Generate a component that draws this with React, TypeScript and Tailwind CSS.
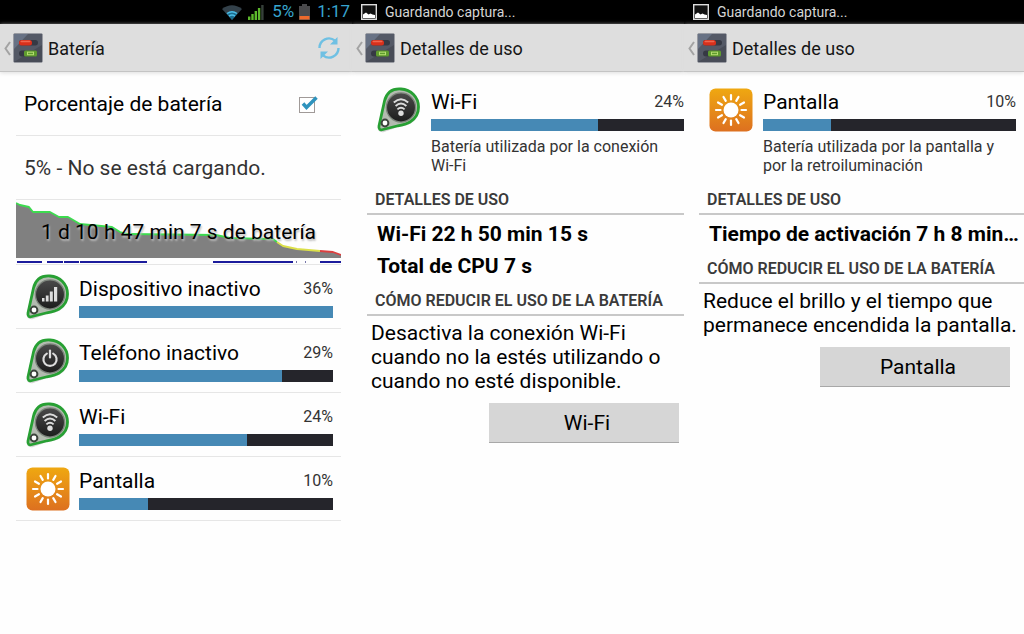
import { useState } from 'react'
import type { ReactNode } from 'react'

type IconKind = 'signal' | 'power' | 'wifi' | 'screen'

type Usage = {
    kind: IconKind
    name: string
    percent: number
    fill: number
}

const usages: Usage[] = [
    { kind: 'signal', name: 'Dispositivo inactivo', percent: 36, fill: 100 },
    { kind: 'power', name: 'Teléfono inactivo', percent: 29, fill: 80 },
    { kind: 'wifi', name: 'Wi-Fi', percent: 24, fill: 66 },
    { kind: 'screen', name: 'Pantalla', percent: 10, fill: 27 },
]

const SunIcon = () => (
    <svg viewBox="0 0 44 44" className="size-11 shrink-0" aria-hidden="true">
        <defs>
            <linearGradient id="sun" x1="0" y1="0" x2="0" y2="1">
                <stop offset="0" stopColor="#efa811" />
                <stop offset="1" stopColor="#dd7020" />
            </linearGradient>
        </defs>
        <rect x="0.5" y="0.5" width="43" height="43" rx="6" fill="url(#sun)" />
        <circle cx="22" cy="22" r="7.5" fill="#fff" />
        <g stroke="#fff" strokeWidth="2.2" strokeLinecap="round">
            {[0, 30, 60, 90, 120, 150, 180, 210, 240, 270, 300, 330].map((angle) => (
                <path key={angle} d="M22 11.5V7" transform={`rotate(${angle} 22 22)`} />
            ))}
        </g>
    </svg>
)

const glyphs: Record<string, ReactNode> = {
    signal: (
        <g fill="#ddd">
            <rect x="16" y="23" width="2.5" height="3.5" />
            <rect x="19.8" y="20.5" width="2.8" height="6" />
            <rect x="23.8" y="16.5" width="3" height="10" />
            <rect x="28" y="12" width="3.2" height="14.5" />
        </g>
    ),
    power: (
        <g fill="none" stroke="#ddd" strokeWidth="2.2" strokeLinecap="round">
            <path d="M20.8 14.6A6.6 6.6 0 1 0 27.2 14.6" />
            <path d="M24 11.5V18.5" />
        </g>
    ),
    wifi: (
        <g fill="none" stroke="#ddd" strokeWidth="1.9">
            <path d="M16.8 14.5Q24 8 31.2 14.5" />
            <path d="M18.6 18Q24 13.2 29.4 18" />
            <path d="M20.4 21.4Q24 18.2 27.6 21.4" />
            <circle cx="24" cy="25.3" r="2.7" fill="#ddd" stroke="none" />
        </g>
    ),
}

const TagIcon = ({ kind }: { kind: IconKind }) => (
    <svg viewBox="0 0 44 44" className="size-11 shrink-0 overflow-visible" aria-hidden="true">
        <defs>
            <linearGradient id="disc" x1="0" y1="0" x2="0" y2="1">
                <stop offset="0" stopColor="#4a4a4a" />
                <stop offset="1" stopColor="#1c1c1c" />
            </linearGradient>
        </defs>
        <path d="M7 12C11 1 28-3 37 6C45 13 45 27 36 34C31 38 26 38 21 39L7 44C3 45 0 42 1 38Z" fill="#777" opacity="0.3" />
        <path d="M7.5 13C10 3 17 0.5 24 1C34 1.5 41.5 9 41.5 19C41.5 26 38 31 33 34C29 36.5 25 37 20 38L6 41.5C3 42.500 1.5 41 2 38Z" fill="#b3bbb0" stroke="#27a033" strokeWidth="2.8" />
        <circle cx="24" cy="19.5" r="14.6" fill="url(#disc)" stroke="#7d857c" strokeWidth="1.3" />
        <circle cx="8" cy="35" r="3.4" fill="#fff" stroke="#3c443c" strokeWidth="2" />
        {glyphs[kind]}
    </svg>
)

const UsageIcon = ({ kind }: { kind: IconKind }) => (kind === 'screen' ? <SunIcon /> : <TagIcon kind={kind} />)

const SettingsIcon = () => (
    <svg viewBox="0 0 30 30" className="size-[30px]" aria-hidden="true">
        <rect x="0.5" y="0.5" width="29" height="29" rx="1" fill="#545966" />
        <path d="M1 1H15L1 16Z" fill="#687285" />
        <path d="M1 29L29 12V29Z" fill="#484c57" />
        <rect x="6" y="7" width="19" height="5.5" rx="2.7" fill="#363944" />
        <rect x="6" y="7" width="13" height="5.5" rx="2.5" fill="#d8301c" />
        <rect x="7.5" y="7.8" width="10" height="1.5" rx="0.7" fill="#ee6750" />
        <rect x="6" y="17.5" width="18" height="6" rx="3" fill="#363944" />
        <rect x="11" y="17.5" width="13" height="6" rx="1.5" fill="#5f9c2f" />
        <rect x="14.5" y="19.2" width="6" height="2.5" fill="none" stroke="#b5dd70" />
    </svg>
)

const RefreshIcon = () => (
    <svg viewBox="0 0 24 24" className="size-6" fill="none" stroke="#6fc0e3" strokeWidth="2.4" aria-hidden="true">
        <path d="M2.5 12A9.5 9.5 0 0 1 18 4.6" />
        <path d="M21.5 12A9.5 9.5 0 0 1 6 19.4" />
        <path d="M20.5 1V8.5H13Z" fill="#6fc0e3" stroke="none" />
        <path d="M3.5 23V15.5H11Z" fill="#6fc0e3" stroke="none" />
    </svg>
)

const PictureIcon = () => (
    <svg viewBox="0 0 16 16" className="size-4" aria-hidden="true">
        <rect x="0.7" y="0.7" width="14.6" height="14.6" fill="#111" stroke="#ddd" strokeWidth="1.4" />
        <path d="M2 14V10.5L5 8.5L7.5 10.5L9.5 9.5L11.5 10.5L14 11V14Z" fill="#fff" />
    </svg>
)

const StatusIcons = () => (
    <div className="flex h-full items-center justify-end pr-[2px] text-[17px] text-[#37a5cf]">
        <svg viewBox="0 0 20 15" className="mr-[6px] h-[15px] w-5" aria-label="Wi-Fi">
            <path d="M0 4Q10-3.5 20 4L10 15Z" fill="#33414a" />
            <path d="M4.5 8.5Q10 4.5 15.5 8.5L10 15Z" fill="#1b6d8f" />
            <path d="M5 8.5Q10 4.8 15 8.5M7 11.2Q10 9 13 11.2" fill="none" stroke="#4cbde6" strokeWidth="1.5" />
        </svg>
        <svg viewBox="0 0 16 15" className="mr-2 h-[15px] w-4" aria-label="Señal">
            <rect x="0" y="11.5" width="2.4" height="3.5" fill="#5cb82c" />
            <rect x="3.3" y="9" width="2.4" height="6" fill="#5cb82c" />
            <rect x="6.6" y="6" width="2.4" height="9" fill="#5cb82c" />
            <rect x="9.9" y="3" width="2.4" height="12" fill="#5cb82c" />
            <rect x="13.2" y="0" width="2.4" height="15" fill="#36403a" />
        </svg>
        <span>5%</span>
        <svg viewBox="0 0 11 16" className="mr-[7px] ml-[5px] h-4 w-[11px]" aria-label="Batería">
            <path d="M3 0H8V2H11V16H0V2H3Z" fill="#4a4a4c" />
            <rect x="0.5" y="12" width="10" height="3.5" fill="#ee6a2c" />
        </svg>
        <span>1:17</span>
    </div>
)

const SavingNotice = () => (
    <div className="flex h-full items-center gap-2 pl-[9px] text-sm text-[#d5d5d5]">
        <PictureIcon />
        <span>Guardando captura...</span>
    </div>
)

type ScreenProps = {
    title: string
    status: ReactNode
    action?: ReactNode
    children: ReactNode
}

const Screen = ({ title, status, action, children }: ScreenProps) => (
    <section className="min-w-0">
        <div className="h-6 bg-black">{status}</div>
        <header className="flex h-12 items-center border-b border-[#c4c4c4] bg-[#dedede] pt-px pr-[11px] pl-1 shadow-[0_1px_4px_#ddd]">
            <button type="button" aria-label="Atrás" className="flex items-center gap-[2px]">
                <svg viewBox="0 0 7 15" className="h-[15px] w-[7px]" fill="none" stroke="#a3a3a3" strokeWidth="2" aria-hidden="true">
                    <path d="M6 1L1.5 7.5L6 14" />
                </svg>
                <SettingsIcon />
            </button>
            <h1 className="ml-[5px] flex-1 pt-px text-lg text-[#151515]">{title}</h1>
            {action}
        </header>
        {children}
    </section>
)

const Bar = ({ fill }: { fill: number }) => (
    <div className="h-3 bg-[#25252b]">
        <div className="h-full bg-[#4689b5]" style={{ width: `${fill}%` }} />
    </div>
)

const UsageHead = ({ usage }: { usage: Usage }) => (
    <>
        <div className="mb-[5px] flex items-center justify-between">
            <span className="text-[21px] leading-6">{usage.name}</span>
            <span className="text-base leading-6 text-[#333]">{usage.percent}%</span>
        </div>
        <Bar fill={usage.fill} />
    </>
)

const BatteryChart = () => (
    <svg viewBox="0 0 325 64" preserveAspectRatio="none" className="h-16 w-full" aria-hidden="true">
        <path d="M0 3L4 5L13 7L17 12H34L43 17H52L64 24L96 27L104 32L112 34L200 35L214 38L257 39L267 46L281 49L304 51L317 52L325 55V58H0Z" fill="#808080" />
        <g fill="none" strokeWidth="1.8" strokeLinejoin="round">
            <path d="M0 3L4 5L13 7L17 12H34L43 17H52L64 24L96 27L104 32L112 34L200 35L214 38L257 39L261 42" stroke="#3ddb4f" />
            <path d="M261 42L267 46L281 49L304 51" stroke="#dce04a" />
            <path d="M304 51L317 52L325 55" stroke="#dc4040" />
        </g>
        <path d="M1 62H26M31 62H47M48 62H63M64 62H131M197 62H277M304 62H325" stroke="#1c1c9c" strokeWidth="2" />
        <path d="M280 62H281M289 62H290" stroke="#7777aa" strokeWidth="2" />
    </svg>
)

const BatteryScreen = () => {
    const [showPercent, setShowPercent] = useState(true)

    return (
        <Screen
            title="Batería"
            status={<StatusIcons />}
            action={<button type="button" aria-label="Actualizar"><RefreshIcon /></button>}
        >
            <div className="pr-[11px] pl-4">
                <label className="flex h-16 items-center justify-between border-b border-[#e6e6e6] pt-[2px] pr-[26px] pl-2 text-[21px]">
                    Porcentaje de batería
                    <span className="relative size-4">
                        <input
                            type="checkbox"
                            checked={showPercent}
                            onChange={(e) => setShowPercent(e.target.checked)}
                            className="block size-4 appearance-none border border-[#a09a98] bg-white"
                        />
                        {showPercent && (
                            <svg viewBox="0 0 16 16" className="pointer-events-none absolute inset-0 size-4 overflow-visible" fill="none" stroke="#2f93bd" strokeWidth="3.5" aria-hidden="true">
                                <path d="M4 6.5L7.5 10.5L17.5 0.5" />
                            </svg>
                        )}
                    </span>
                </label>
                <p className="flex h-16 items-center border-b border-[#e6e6e6] pt-[3px] pl-2 text-[21px] text-[#333]">5% - No se está cargando.</p>
                <div className="relative h-[65px] border-b border-[#e6e6e6]">
                    <BatteryChart />
                    <p className="absolute inset-0 flex items-center justify-center pt-px text-[21px] [text-shadow:1px_2px_2px_#bbb]">
                        1 d 10 h 47 min 7 s de batería
                    </p>
                </div>
                <ul>
                    {usages.map((usage) => (
                        <li key={usage.name} className="flex h-16 items-center gap-[9px] border-b border-[#e6e6e6] pr-2 pl-[10px]">
                            <UsageIcon kind={usage.kind} />
                            <div className="flex-1 pt-px">
                                <UsageHead usage={usage} />
                            </div>
                        </li>
                    ))}
                </ul>
            </div>
        </Screen>
    )
}

type DetailProps = {
    usage: Usage
    description: string
    stats: string[]
    tip: string
    last?: boolean
}

const SectionTitle = ({ children }: { children: ReactNode }) => (
    <h2 className="border-b-2 border-[#c8c8c8] pb-px pl-2 text-base leading-6 font-semibold text-[#3a3a3a]">{children}</h2>
)

const DetailScreen = ({ usage, description, stats, tip, last }: DetailProps) => (
    <Screen title="Detalles de uso" status={<SavingNotice />}>
        <div className="pl-[15px]">
            <div className={`flex gap-[10px] pt-4 pl-[10px] ${last ? 'pr-2' : ''}`}>
                <UsageIcon kind={usage.kind} />
                <div className="flex-1 pt-[2px]">
                    <UsageHead usage={usage} />
                    <p className="mt-[6px] pr-3 text-base leading-[19px] text-[#333]">{description}</p>
                </div>
            </div>
            <div className="pt-[13px]">
                <SectionTitle>DETALLES DE USO</SectionTitle>
            </div>
            <dl className="pt-[3px] pl-[10px] text-[21px] leading-8 font-bold">
                {stats.map((stat) => (
                    <dd key={stat} className="whitespace-nowrap">{stat}</dd>
                ))}
            </dl>
            <div className="pt-[7px]">
                <SectionTitle>CÓMO REDUCIR EL USO DE LA BATERÍA</SectionTitle>
            </div>
            <p className="pt-[5px] pl-1 text-[21px] leading-6">{tip}</p>
            <div className={`flex justify-end pt-[10px] ${last ? 'pr-[14px]' : 'pr-[5px]'}`}>
                <button type="button" className="h-10 w-[190px] border-b border-[#a8a8a8] bg-[#d6d6d6] pt-[2px] pl-[6px] text-[21px]">
                    {usage.name}
                </button>
            </div>
        </div>
    </Screen>
)

export default function App() {
    return (
        <main className="grid min-h-screen grid-cols-[352fr_332fr_340fr] bg-[#fefefe] font-['Roboto',sans-serif] text-black">
            <BatteryScreen />
            <DetailScreen
                usage={usages[2]}
                description="Batería utilizada por la conexión Wi-Fi"
                stats={['Wi-Fi 22 h 50 min 15 s', 'Total de CPU 7 s']}
                tip="Desactiva la conexión Wi-Fi cuando no la estés utilizando o cuando no esté disponible."
            />
            <DetailScreen
                usage={usages[3]}
                description="Batería utilizada por la pantalla y por la retroiluminación"
                stats={['Tiempo de activación 7 h 8 min…']}
                tip="Reduce el brillo y el tiempo que permanece encendida la pantalla."
                last
            />
        </main>
    )
}
